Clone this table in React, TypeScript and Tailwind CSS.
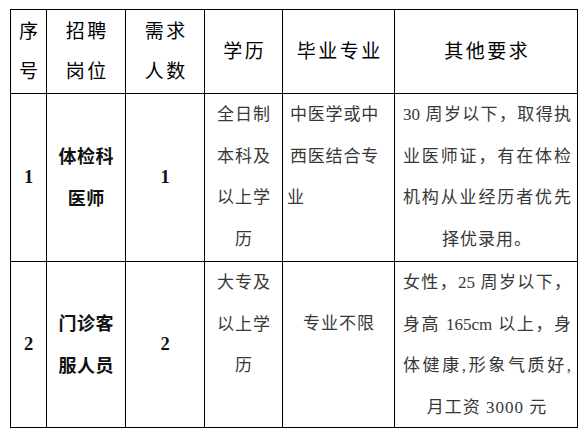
import React from 'react';

// 招聘岗位表：表头 + 两行岗位

const head = 'flex flex-col items-center justify-center bg-white text-center text-[19px] leading-[40px] tracking-[2.5px] pl-[2.5px] text-black';
const bold = 'flex flex-col items-center justify-center bg-white text-center font-bold text-[18px] leading-[42px] tracking-[0.5px] pl-[0.5px] text-[#111]';
const num = 'flex items-center justify-center bg-white font-bold text-[18.5px] text-[#111]';
const body = 'bg-white text-[17px] leading-[41.5px] text-[#383838]';
const fill = 'text-justify [text-align-last:justify]';

export default function App() {
  return (
    <div className="min-h-[434px] w-[587px] bg-white pl-[10px] pt-[9px] [font-family:'Liberation_Serif','Noto_Sans_CJK_SC',serif]">
      <div className="grid w-[568px] grid-cols-[35px_78px_78px_77px_111px_182px] grid-rows-[83px_167px_165px] gap-px bg-black p-px">
        {/* 表头 */}
        <div className={head}>
          <div>序</div>
          <div>号</div>
        </div>
        <div className={head}>
          <div>招聘</div>
          <div>岗位</div>
        </div>
        <div className={head}>
          <div>需求</div>
          <div>人数</div>
        </div>
        <div className={head}>学历</div>
        <div className={head}>毕业专业</div>
        <div className={head}>其他要求</div>

        {/* 第一行 */}
        <div className={num}>1</div>
        <div className={bold}>
          <div>体检科</div>
          <div>医师</div>
        </div>
        <div className={num}>1</div>
        <div className={`${body} text-center tracking-[1px] pl-px`}>
          <div>全日制</div>
          <div>本科及</div>
          <div>以上学</div>
          <div>历</div>
        </div>
        <div className={`${body} pl-[7px] tracking-[0.8px]`}>
          <div>中医学或中</div>
          <div>西医结合专</div>
          <div className="-ml-[3px]">业</div>
        </div>
        <div className={`${body} pl-[8px] pr-[6px]`}>
          <div className={fill}>30 周岁以下，取得执</div>
          <div className={fill}>业医师证，有在体检</div>
          <div className={fill}>机构从业经历者优先</div>
          <div className="text-center tracking-[1px]">择优录用。</div>
        </div>

        {/* 第二行 */}
        <div className={num}>2</div>
        <div className={bold}>
          <div>门诊客</div>
          <div>服人员</div>
        </div>
        <div className={num}>2</div>
        <div className={`${body} text-center tracking-[1px] pl-px`}>
          <div>大专及</div>
          <div>以上学</div>
          <div>历</div>
        </div>
        <div className={`${body} pt-[41px] text-center tracking-[1px] pl-px`}>专业不限</div>
        <div className={`${body} pl-[8px] pr-[6px]`}>
          <div className={fill}>女性，25 周岁以下，</div>
          <div className={fill}>身高 165cm 以上，身</div>
          <div className={fill}>体健康,形象气质好,</div>
          <div className="text-center tracking-[1px]">月工资 3000 元</div>
        </div>
      </div>
    </div>
  );
}
